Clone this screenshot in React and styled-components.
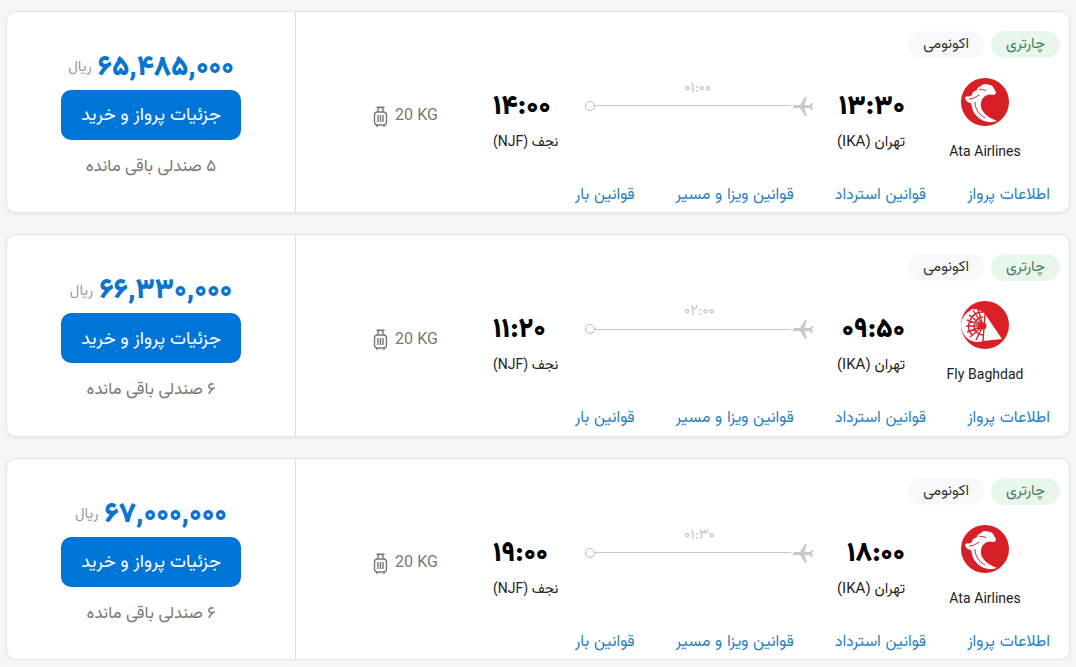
import React from 'react';
import styled, { createGlobalStyle } from 'styled-components';

const GlobalStyle = createGlobalStyle`
  html, body {
    margin: 0;
    background: #f6f6f6;
    font-family: "Vazirmatn", "Noto Sans Arabic", "Roboto", sans-serif;
  }
`;

const Page = styled.div`
  direction: rtl;
  padding: 10.7px 6px 0;
  display: flex;
  flex-direction: column;
  gap: 21px;
`;

const Card = styled.div`
  display: flex;
  height: 202.5px;
  background: #fff;
  border: 1px solid #e6e6e6;
  border-radius: 10px;
  box-shadow: 0 1px 3px rgba(0, 0, 0, 0.08);
  box-sizing: border-box;
`;

const Main = styled.div`
  flex: 1;
  display: flex;
  flex-direction: column;
  padding: 19px 9px 0 0;
`;

const Tags = styled.div`
  display: flex;
  gap: 7px;
`;

const Tag = styled.span`
  height: 27px;
  padding: 0 15px;
  border-radius: 14px;
  font-size: 15px;
  line-height: 27px;
  color: ${(p) => (p.$green ? '#47795a' : '#333')};
  background: ${(p) => (p.$green ? '#e8f7ec' : '#f8f9fa')};
`;

const Route = styled.div`
  display: flex;
  height: 102px;
  margin-top: 20px;
`;

const Airline = styled.div`
  width: 150px;
  display: flex;
  flex-direction: column;
  align-items: center;
`;

const AirlineName = styled.span`
  margin-top: 18px;
  font-size: 14px;
  line-height: 18px;
  color: #222;
`;

const Stop = styled.div`
  width: ${(p) => p.$width}px;
  margin-right: ${(p) => p.$gap}px;
  display: flex;
  flex-direction: column;
  align-items: ${(p) => (p.$end ? 'flex-end' : 'flex-start')};
`;

const Time = styled.div`
  margin-top: 13px;
  direction: ltr;
  font-size: 27px;
  line-height: 34px;
  font-weight: 900;
  color: #000;
`;

const City = styled.div`
  margin-top: 8px;
  font-size: ${(p) => p.$size}px;
  line-height: 20px;
  white-space: nowrap;
  color: #222;
`;

const Track = styled.div`
  width: 230px;
  margin-right: 20px;
  position: relative;
  display: flex;
  align-items: center;
  height: 24px;
  margin-top: 16px;
`;

const Duration = styled.span`
  position: absolute;
  top: -12px;
  left: 99px;
  direction: ltr;
  font-size: 15px;
  line-height: 14px;
  color: #c4c7ca;
`;

const Line = styled.div`
  flex: 1;
  height: 1px;
  background: #c4c6c8;
`;

const Dot = styled.div`
  width: 8px;
  height: 8px;
  border: 1px solid #bbb;
  border-radius: 50%;
  background: #fff;
`;

const Baggage = styled.div`
  margin-right: 55px;
  margin-top: 27px;
  height: 24px;
  display: flex;
  align-items: center;
  gap: 7px;
  font-size: 16px;
  color: #777;
`;

const Links = styled.div`
  display: flex;
  gap: 41px;
  padding-right: 10px;
  margin-top: 6px;
`;

const RuleLink = styled.a`
  font-size: 16px;
  line-height: 20px;
  word-spacing: 0.5px;
  color: #2a7fc1;
`;

const Purchase = styled.div`
  width: 289px;
  border-right: 1px solid #dedede;
  display: flex;
  flex-direction: column;
  align-items: center;
  padding-top: 41px;
  box-sizing: border-box;
`;

const PriceRow = styled.div`
  display: flex;
  align-items: center;
  gap: 6px;
  height: 30px;
`;

const Amount = styled.span`
  direction: ltr;
  font-size: 28px;
  font-weight: 900;
  color: #0a74cf;
`;

const Unit = styled.span`
  font-size: 15px;
  color: #999;
`;

const BuyButton = styled.button`
  width: 180px;
  height: 50px;
  margin-top: 7px;
  padding: 2px 0 0;
  border: 0;
  border-radius: 10px;
  background: #0075d8;
  color: #fff;
  font: inherit;
  font-size: 18.2px;
`;

const Seats = styled.div`
  margin-top: 16px;
  font-size: 16.8px;
  line-height: 22px;
  color: #777;
`;

const AtaLogo = () => (
  <svg width="48" height="48" viewBox="0 0 48 48">
    <circle cx="24" cy="24" r="24" fill="#d71f26" />
    <path
      d="M4 19C7 18 9 19 11 17C11 14 14 13 16 12C16 9 19 9 21 7C24 5 27 7 29 7C32 7 33 11 35 14C35 16 34 17 32 17C26 15 21 19 20 25C19 31 23 38 36 43C28 46 19 43 14 36C11 32 11 28 10 25C7 25 4 22 4 19Z"
      fill="#fff"
    />
    <path d="M8 21c4 0 7-2 10-4M14 24c0 6 3 12 10 16M18 11c2 1 5 0 7 2" fill="none" stroke="#d71f26" strokeWidth="1" />
  </svg>
);

const BaghdadLogo = () => (
  <svg width="48" height="48" viewBox="0 0 48 48">
    <circle cx="24" cy="24" r="24" fill="#dc2028" />
    <path d="M24 13L41 38L22 40Z" fill="#fff" />
    <path d="M22 40A16.5 16.5 0 0 1 7 11L11 8A17 17 0 0 1 24 13L23 25Z" fill="#fff" />
    <path
      d="M22 25L5 25M22 25L6 19M22 25L8 14M22 25L12 9M22 25L17 8M22 25L6 31M22 25L9 36M22 25L15 39M22 16A9 9 0 0 0 22 34M22 11A14 14 0 0 0 11 34M24 13L22 40"
      fill="none"
      stroke="#dc2028"
      strokeWidth="1.4"
    />
    <circle cx="22" cy="25" r="3.5" fill="#dc2028" />
  </svg>
);

const PlaneIcon = () => (
  <svg width="24" height="24" viewBox="0 0 24 24" fill="#c6cacd">
    <path
      transform="rotate(-90 12 12)"
      d="M21 16v-2l-8-5V3.5c0-.83-.67-1.5-1.5-1.5S10 2.67 10 3.5V9l-8 5v2l8-2.5V19l-2 1.5V22l3.5-1 3.5 1v-1.5L13 19v-5.5l8 2.5z"
    />
  </svg>
);

const SuitcaseIcon = () => (
  <svg width="15" height="22" viewBox="0 0 15 22" fill="none" stroke="#777" strokeWidth="1.4">
    <rect x="1.5" y="6" width="12" height="13" rx="3" />
    <path d="M5 6V1.5h5V6M3.5 1.2h8M5 9v7M7.5 9v7M10 9v7M4 19v2M11 19v2" />
  </svg>
);

const flights = [
  { id: 1, airline: 'Ata Airlines', Logo: AtaLogo, from: '۱۳:۳۰', to: '۱۴:۰۰', duration: '۰۱:۰۰', price: '۶۵,۴۸۵,۰۰۰', seats: '۵' },
  { id: 2, airline: 'Fly Baghdad', Logo: BaghdadLogo, from: '۰۹:۵۰', to: '۱۱:۲۰', duration: '۰۲:۰۰', price: '۶۶,۳۳۰,۰۰۰', seats: '۶' },
  { id: 3, airline: 'Ata Airlines', Logo: AtaLogo, from: '۱۸:۰۰', to: '۱۹:۰۰', duration: '۰۱:۳۰', price: '۶۷,۰۰۰,۰۰۰', seats: '۶' },
];

const rules = ['اطلاعات پرواز', 'قوانین استرداد', 'قوانین ویزا و مسیر', 'قوانین بار'];

export default function App() {
  return (
    <Page>
      <GlobalStyle />
      {flights.map(({ id, airline, Logo, from, to, duration, price, seats }) => (
        <Card key={id}>
          <Main>
            <Tags>
              <Tag $green>چارتری</Tag>
              <Tag>اکونومی</Tag>
            </Tags>
            <Route>
              <Airline>
                <Logo />
                <AirlineName dir="ltr">{airline}</AirlineName>
              </Airline>
              <Stop $width={70} $gap={5}>
                <Time>{from}</Time>
                <City $size={15}>تهران (IKA)</City>
              </Stop>
              <Track>
                <PlaneIcon />
                <Line />
                <Dot />
                <Duration>{duration}</Duration>
              </Track>
              <Stop $width={65} $gap={27} $end>
                <Time>{to}</Time>
                <City $size={14}>نجف (NJF)</City>
              </Stop>
              <Baggage>
                <span dir="ltr">20 KG</span>
                <SuitcaseIcon />
              </Baggage>
            </Route>
            <Links>
              {rules.map((rule) => (
                <RuleLink key={rule}>{rule}</RuleLink>
              ))}
            </Links>
          </Main>
          <Purchase>
            <PriceRow>
              <Amount>{price}</Amount>
              <Unit>ریال</Unit>
            </PriceRow>
            <BuyButton>جزئیات پرواز و خرید</BuyButton>
            <Seats>{seats} صندلی باقی مانده</Seats>
          </Purchase>
        </Card>
      ))}
    </Page>
  );
}
